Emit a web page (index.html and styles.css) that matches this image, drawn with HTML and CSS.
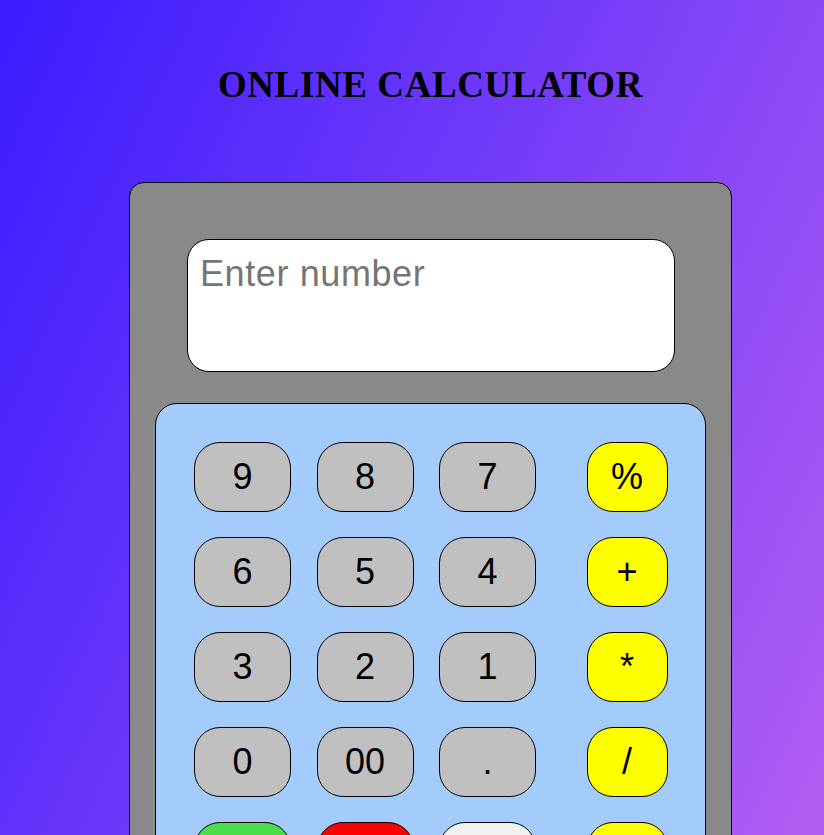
FILE: index.html
```html
<!DOCTYPE html>
<html lang="en">
<head>
<meta charset="utf-8">
<title>Online Calculator</title>
<link rel="stylesheet" href="styles.css">
</head>
<body>
<div class="page">
  <h1 class="title">ONLINE CALCULATOR</h1>
  <div class="calculator">
    <input class="display" type="text" placeholder="Enter number">
    <div class="keypad">
      <button class="key">9</button>
      <button class="key">8</button>
      <button class="key">7</button>
      <button class="key op">%</button>
      <button class="key">6</button>
      <button class="key">5</button>
      <button class="key">4</button>
      <button class="key op">+</button>
      <button class="key">3</button>
      <button class="key">2</button>
      <button class="key">1</button>
      <button class="key op">*</button>
      <button class="key">0</button>
      <button class="key">00</button>
      <button class="key">.</button>
      <button class="key op">/</button>
      <button class="key equal">=</button>
      <button class="key clear">C</button>
      <button class="key del">DEL</button>
      <button class="key op">-</button>
    </div>
  </div>
</div>
</body>
</html>
```
FILE: styles.css
```css
html {
  height: 100%;
}

body {
  margin: 0;
  min-height: 100%;
  overflow: hidden;
  background: linear-gradient(115deg, #3a1cff 0%, #b25ef2 100%);
}

.page {
  width: 603px;
  margin-left: 129px;
  padding-top: 64px;
  height: 770px;
}

.title {
  margin: 0;
  font-family: "Liberation Serif", "Times New Roman", serif;
  font-weight: bold;
  font-size: 37px;
  letter-spacing: 0.6px;
  line-height: 42px;
  text-align: center;
  color: #000;
}

.calculator {
  box-sizing: border-box;
  width: 603px;
  height: 760px;
  margin-top: 76px;
  padding: 56px 25px 0;
  background: #898989;
  border: 1px solid #000;
  border-radius: 15px;
}

.display {
  display: block;
  box-sizing: border-box;
  width: 488px;
  height: 133px;
  margin: 0 0 0 32px;
  padding: 13px 11px 77px 12px;
  border: 1px solid #000;
  border-radius: 22px;
  background: #fff;
  font-family: "Liberation Sans", Arial, sans-serif;
  font-size: 36px;
  letter-spacing: 0.6px;
  line-height: 41px;
  color: #000;
  outline: none;
}

.display::placeholder {
  color: #757575;
}

.keypad {
  box-sizing: border-box;
  width: 551px;
  height: 600px;
  margin-top: 31px;
  padding: 38px 0 0 38px;
  background: #a3ccfd;
  border: 1px solid #000;
  border-radius: 22px;
  display: grid;
  grid-template-columns: 97px 97px 97px 106px;
  grid-auto-rows: 70px;
  column-gap: 25.5px;
  row-gap: 25px;
  align-content: start;
}

.key {
  box-sizing: border-box;
  width: 97px;
  height: 70px;
  padding: 0;
  border: 1px solid #000;
  border-radius: 26px;
  background: #c0c0c0;
  font-family: "Liberation Sans", Arial, sans-serif;
  font-size: 36px;
  color: #000;
}

.op {
  width: 81px;
  background: #ffff00;
  justify-self: end;
}

.equal {
  background: #4be04b;
}

.clear {
  background: #ff0000;
}

.del {
  background: #f0f0f0;
}
```
